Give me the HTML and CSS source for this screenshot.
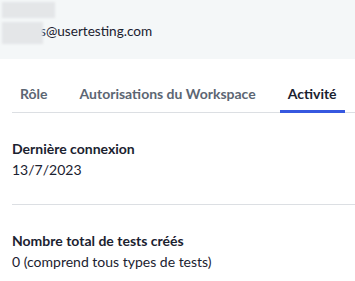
FILE: index.html
```html
<!DOCTYPE html>
<html lang="fr">
<head>
  <meta charset="UTF-8" />
  <title>Utilisateur</title>
  <link rel="stylesheet" href="styles.css">
</head>
<body>
  <div class="user-header">
    <div class="blur blur-name"></div>
    <div class="email-row">
      <span class="blur blur-email"></span><span class="email">s@usertesting.com</span>
    </div>
  </div>

  <div class="tabs">
    <button class="tab">Rôle</button>
    <button class="tab">Autorisations du Workspace</button>
    <button class="tab active">Activité</button>
  </div>

  <div class="section">
    <h4>Dernière connexion</h4>
    <p>13/7/2023</p>
  </div>

  <div class="section">
    <h4>Nombre total de tests créés</h4>
    <p>0 (comprend tous types de tests)</p>
  </div>
</body>
</html>
```

FILE: styles.css
```css
body {
  margin: 0;
  font-family: Lato, 'Open Sans', sans-serif;
  background: #ffffff;
  color: #1b2230;
  font-size: 14px;
}

.user-header {
  background: #f4f7f8;
  height: 59px;
  padding-top: 2px;
  box-sizing: border-box;
}

.blur {
  display: block;
  background: #e4e6e8;
  filter: blur(1px);
}

.blur-name {
  width: 53px;
  height: 16px;
  margin-left: 2px;
}

.email-row {
  display: flex;
  align-items: flex-start;
  margin-top: 4px;
}

.blur-email {
  width: 41px;
  height: 22px;
  margin-left: 2px;
}

.email {
  margin: 1px 0 0 -3px;
  font-size: 13.6px;
  line-height: 17px;
  color: #1b2230;
}

.tabs {
  display: flex;
  margin: 20px 0 0 12px;
  border-bottom: 1px solid #dcdfe3;
}

.tab {
  background: none;
  border: none;
  font-family: inherit;
  font-size: 14px;
  line-height: 17px;
  font-weight: bold;
  color: #5c6673;
  padding: 6px 8px 8px;
  margin-bottom: -1px;
  border-bottom: 3px solid transparent;
}

.tab + .tab {
  margin-left: 16px;
}

.tab.active {
  color: #1b2230;
  border-bottom-color: #3658e0;
}

.section {
  margin-left: 12px;
  padding: 25px 0 24px;
  border-bottom: 1px solid #dcdfe3;
}

.section:last-child {
  border-bottom: none;
  padding-bottom: 0;
}

.section h4 {
  margin: 0;
  font-size: 14px;
  font-weight: bold;
  line-height: 21px;
}

.section p {
  margin: 0;
  line-height: 21px;
}
```
